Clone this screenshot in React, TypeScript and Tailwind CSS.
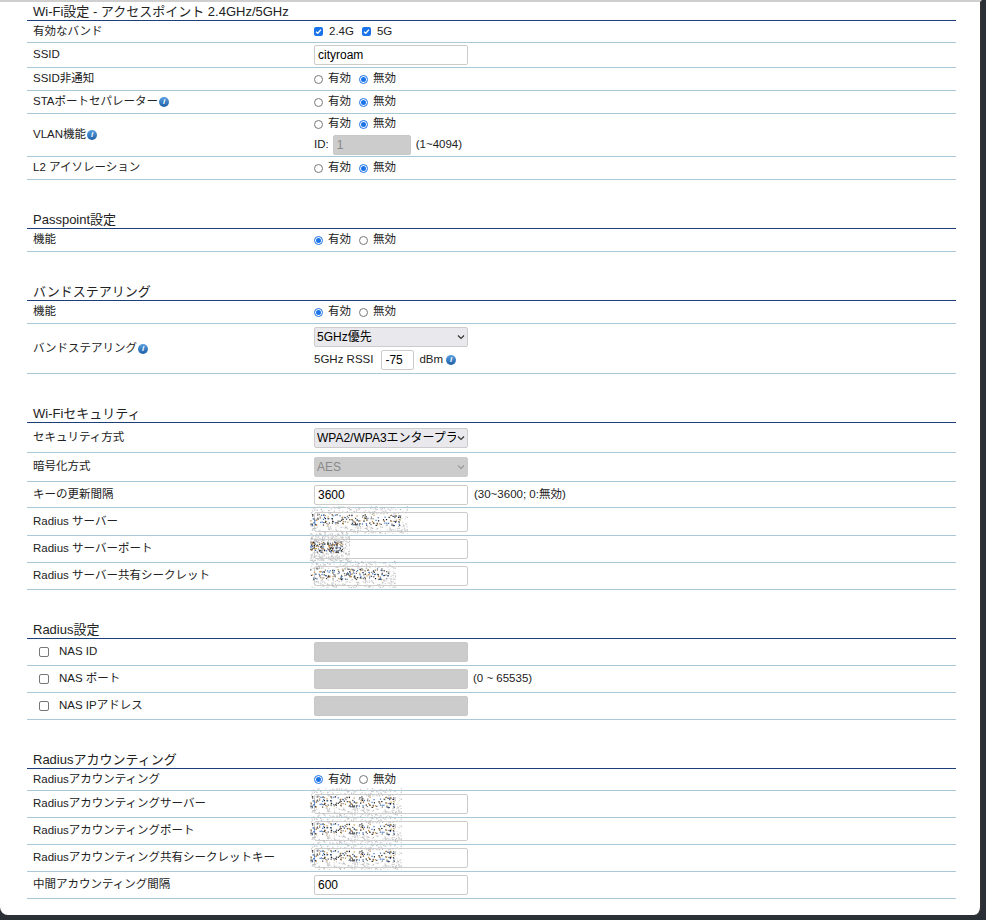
import React from "react";

const font = { fontFamily: '"Liberation Sans", Arial, "Noto Sans CJK JP", sans-serif' };

function Info() {
  return (
    <span className="ml-[1px] inline-flex h-[10px] w-[10px] items-center justify-center rounded-full bg-gradient-to-b from-[#5aa0e0] to-[#1d5fa8] text-[8px] font-bold italic leading-none text-white">
      i
    </span>
  );
}

function Radio({ on, label }: { on?: boolean; label: string }) {
  return (
    <span className="mr-[8px] inline-flex items-center gap-[5px]">
      <span
        className={
          on
            ? "flex h-[9px] w-[9px] items-center justify-center rounded-full border border-[#1a73e8]"
            : "h-[9px] w-[9px] rounded-full border border-[#777]"
        }
      >
        {on && <span className="h-[5px] w-[5px] rounded-full bg-[#1a73e8]" />}
      </span>
      {label}
    </span>
  );
}

function OnOff({ on }: { on: boolean }) {
  return (
    <div className="flex items-center">
      <Radio on={on} label="有効" />
      <Radio on={!on} label="無効" />
    </div>
  );
}

function Check({ on }: { on?: boolean }) {
  return on ? (
    <span className="flex h-[9px] w-[9px] items-center justify-center rounded-[2px] bg-[#1a73e8]">
      <svg width="7" height="7" viewBox="0 0 8 8">
        <path d="M1.2 4.2 L3.2 6 L6.8 1.8" stroke="white" strokeWidth="1.5" fill="none" />
      </svg>
    </span>
  ) : (
    <span className="h-[10px] w-[10px] rounded-[2px] border border-[#777] bg-white" />
  );
}

function Input({ value, w = "w-[154px]", disabled }: { value?: string; w?: string; disabled?: boolean }) {
  return (
    <div
      className={`${w} flex h-[20px] items-center rounded-[2px] border px-[3px] text-[12px] ${
        disabled ? "border-[#c8c8c8] bg-[#cccccc] text-[#888]" : "border-[#ccc] bg-white text-black"
      }`}
    >
      {value}
    </div>
  );
}

function Noise({ w }: { w: number }) {
  const dots: React.ReactNode[] = [];
  let s = w * 7 + 3;
  const rnd = () => {
    s = (s * 9301 + 49297) % 233280;
    return s / 233280;
  };
  const dark = ["#111", "#444", "#777", "#c08a40", "#3a6fc0"];
  const light = ["#bbb", "#ccc", "#ddd"];
  for (let i = 0; i < 460; i++) {
    const x = rnd() * w;
    const y = rnd() * 28;
    const core = y > 8 && y < 19 && x < w - 8;
    const pal = core ? dark : light;
    const c = pal[Math.floor(rnd() * pal.length)];
    dots.push(<rect key={i} x={x} y={y} width="1.2" height="1.2" fill={c} />);
  }
  return (
    <svg className="absolute left-[-4px] top-[-6px]" width={w} height="28">
      {dots}
    </svg>
  );
}

function Masked({ w }: { w: number }) {
  return (
    <div className="relative">
      <Input />
      <Noise w={w} />
    </div>
  );
}

function Select({ value, disabled }: { value: string; disabled?: boolean }) {
  return (
    <div
      className={`flex h-[20px] w-[154px] items-center justify-between rounded-[2px] border px-[2px] text-[12px] ${
        disabled ? "border-[#ccc] bg-[#cccccc] text-[#888]" : "border-[#ccc] bg-[#e9e9ed] text-black"
      }`}
    >
      <span className="min-w-0 flex-1 overflow-hidden whitespace-nowrap">{value}</span>
      <svg width="8" height="6" viewBox="0 0 8 6" className="ml-[1px] shrink-0">
        <path d="M1 1.5 L4 4.5 L7 1.5" stroke={disabled ? "#999" : "#333"} strokeWidth="1.2" fill="none" />
      </svg>
    </div>
  );
}

function Row({ label, children, h = "h-[23px]" }: { label: React.ReactNode; children?: React.ReactNode; h?: string }) {
  return (
    <div className={`flex ${h} items-center border-b border-[#a9c9d9]`}>
      <div className="flex w-[287px] items-center pl-[6px]">{label}</div>
      <div className="flex flex-1 items-center">{children}</div>
    </div>
  );
}

function Section({ title, children, first }: { title: string; children: React.ReactNode; first?: boolean }) {
  return (
    <div className={first ? "" : "mt-[30px]"}>
      <div className="flex h-[19px] items-center border-b border-[#1f3f7a] pl-[6px] text-[13px] leading-none">{title}</div>
      {children}
    </div>
  );
}

export default function App() {
  return (
    <div className="h-[920px] bg-[#2b2f36]" style={font}>
      <div className="h-[915px] w-[982px] overflow-hidden rounded-b-[8px] border-t-[2px] border-r-[2px] border-t-[#cfcfcf] border-r-[#333] bg-white">
        <div className="ml-[27px] mr-[24px] text-[11.5px] text-[#222]">
          <Section title="Wi-Fi設定 - アクセスポイント 2.4GHz/5GHz" first>
            <Row label="有効なバンド" h="h-[22px]">
              <span className="flex items-center gap-[6px]">
                <Check on /> 2.4G
              </span>
              <span className="ml-[8px] flex items-center gap-[6px]">
                <Check on /> 5G
              </span>
            </Row>
            <Row label="SSID" h="h-[25px]">
              <Input value="cityroam" />
            </Row>
            <Row label="SSID非通知"><OnOff on={false} /></Row>
            <Row label={<>STAポートセパレーター<Info /></>}><OnOff on={false} /></Row>
            <Row label={<>VLAN機能<Info /></>} h="h-[43px]">
              <div className="flex flex-col gap-[2px]">
                <OnOff on={false} />
                <div className="flex items-center">
                  <span className="mr-[4px]">ID:</span>
                  <Input value="1" w="w-[78px]" disabled />
                  <span className="ml-[5px]">(1~4094)</span>
                </div>
              </div>
            </Row>
            <Row label="L2 アイソレーション"><OnOff on={false} /></Row>
          </Section>

          <Section title="Passpoint設定">
            <Row label="機能"><OnOff on /></Row>
          </Section>

          <Section title="バンドステアリング">
            <Row label="機能"><OnOff on /></Row>
            <Row label={<>バンドステアリング<Info /></>} h="h-[50px]">
              <div className="flex flex-col gap-[3px]">
                <Select value="5GHz優先" />
                <div className="flex items-center">
                  <span className="mr-[8px]">5GHz RSSI</span>
                  <Input value="-75" w="w-[33px]" />
                  <span className="ml-[5px] mr-[2px]">dBm</span>
                  <Info />
                </div>
              </div>
            </Row>
          </Section>

          <Section title="Wi-Fiセキュリティ">
            <Row label="セキュリティ方式" h="h-[30px]">
              <Select value="WPA2/WPA3エンタープライズ" />
            </Row>
            <Row label="暗号化方式" h="h-[29px]">
              <Select value="AES" disabled />
            </Row>
            <Row label="キーの更新間隔" h="h-[26px]">
              <Input value="3600" />
              <span className="ml-[6px]">(30~3600; 0:無効)</span>
            </Row>
            <Row label="Radius サーバー" h="h-[28px]"><Masked w={98} /></Row>
            <Row label="Radius サーバーポート" h="h-[27px]"><Masked w={40} /></Row>
            <Row label="Radius サーバー共有シークレット" h="h-[27px]"><Masked w={86} /></Row>
          </Section>

          <Section title="Radius設定">
            <Row label={<span className="flex items-center gap-[10px] pl-[6px]"><Check /> NAS ID</span>} h="h-[27px]">
              <Input disabled />
            </Row>
            <Row label={<span className="flex items-center gap-[10px] pl-[6px]"><Check /> NAS ポート</span>} h="h-[27px]">
              <Input disabled />
              <span className="ml-[5px]">(0 ~ 65535)</span>
            </Row>
            <Row label={<span className="flex items-center gap-[10px] pl-[6px]"><Check /> NAS IPアドレス</span>} h="h-[27px]">
              <Input disabled />
            </Row>
          </Section>

          <Section title="Radiusアカウンティング">
            <Row label="Radiusアカウンティング" h="h-[22px]"><OnOff on /></Row>
            <Row label="Radiusアカウンティングサーバー" h="h-[27px]"><Masked w={92} /></Row>
            <Row label="Radiusアカウンティングポート" h="h-[27px]"><Masked w={92} /></Row>
            <Row label="Radiusアカウンティング共有シークレットキー" h="h-[27px]"><Masked w={92} /></Row>
            <Row label="中間アカウンティング間隔" h="h-[27px]"><Input value="600" /></Row>
          </Section>
        </div>
      </div>
    </div>
  );
}
